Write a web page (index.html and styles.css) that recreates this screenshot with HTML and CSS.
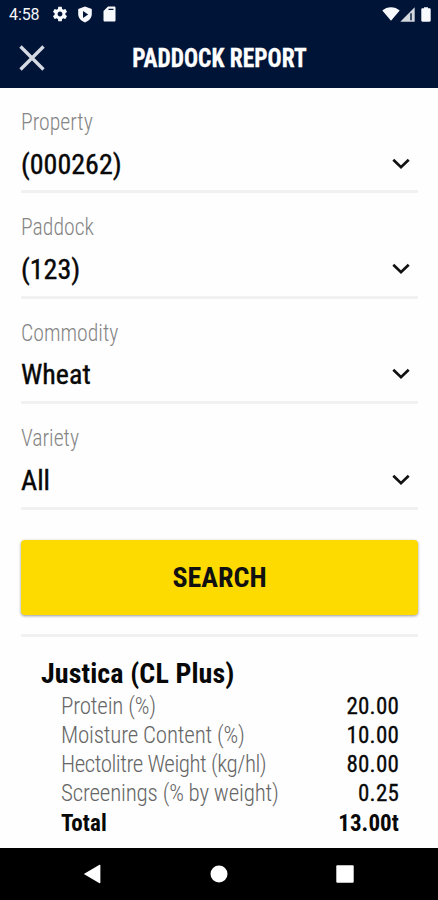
FILE: index.html
```html
<!DOCTYPE html>
<html>
<head>
<meta charset="utf-8">
<title>Paddock Report</title>
<link rel="stylesheet" href="styles.css">
</head>
<body>

<div class="status">
	<span class="time">4:58</span>
	<svg class="gear" width="18" height="18" viewBox="0 0 24 24"><path d="M19.14 12.94c.04-.3.06-.61.06-.94 0-.32-.02-.64-.07-.94l2.03-1.58c.18-.14.23-.41.12-.61l-1.92-3.32c-.12-.22-.37-.29-.59-.22l-2.39.96c-.5-.38-1.03-.7-1.62-.94l-.36-2.54c-.04-.24-.24-.41-.48-.41h-3.84c-.24 0-.43.17-.47.41l-.36 2.54c-.59.24-1.13.57-1.62.94l-2.39-.96c-.22-.08-.47 0-.59.22L2.74 8.87c-.12.21-.08.47.12.61l2.03 1.58c-.05.3-.09.63-.09.94s.02.64.07.94l-2.03 1.58c-.18.14-.23.41-.12.61l1.92 3.32c.12.22.37.29.59.22l2.39-.96c.5.38 1.03.7 1.62.94l.36 2.54c.05.24.24.41.48.41h3.84c.24 0 .44-.17.47-.41l.36-2.54c.59-.24 1.13-.56 1.62-.94l2.39.96c.22.08.47 0 .59-.22l1.92-3.32c.12-.22.07-.47-.12-.61l-2.01-1.58zM12 15.2c-1.760 0-3.200-1.440-3.200-3.200s1.440-3.200 3.200-3.200 3.200 1.440 3.200 3.200-1.440 3.200-3.200 3.200z"/></svg>
	<svg class="shield" width="16" height="17" viewBox="0 0 16 17"><path fill-rule="evenodd" d="M8 .6 14.8 3v5c0 4-2.900 6.900-6.800 8.400C4.100 14.900 1.200 12 1.200 8V3zM6 5v7l5.200-3.500z"/></svg>
	<svg class="card" width="13" height="16" viewBox="0 0 13 16"><path fill-rule="evenodd" d="M5 .5h6.200c.8 0 1.300.5 1.300 1.300v12.400c0 .8-.5 1.300-1.300 1.300H1.800C1 15.500.5 15 .5 14.200V5zM5.500 2.800v1.200h5V2.800z"/></svg>
	<span class="space"></span>
	<svg class="wifi" width="18" height="14" viewBox="0 0 18 14"><path d="M9 13.800.3 3.600C5-.9 13-.9 17.700 3.600z"/></svg>
	<svg class="signal" width="15" height="15" viewBox="0 0 15 15"><path d="M.3 14.800 14.700.3v14.500z" opacity=".85"/><path d="M10.300 6.200h1.400v7h-1.400z" fill="#001438"/></svg>
	<svg class="battery" width="10" height="15" viewBox="0 0 10 15"><path d="M3 .2h4v1h1.500c.7 0 1.200.5 1.200 1.200v11.200c0 .7-.5 1.200-1.200 1.200h-7c-.7 0-1.200-.5-1.200-1.200V2.400c0-.7.5-1.200 1.200-1.200H3z"/></svg>
</div>

<div class="header">
	<svg class="close" width="26" height="26" viewBox="0 0 26 26"><path d="M1.500 1.500l23 23M24.500 1.500l-23 23"/></svg>
	<h1>PADDOCK REPORT</h1>
</div>

<div class="content">
	<div class="field">
		<label>Property</label>
		<div class="select">(000262)<svg class="arrow" width="18" height="12" viewBox="0 0 18 12"><path d="M1.300 1.800 9 9.200l7.700-7.400"/></svg></div>
	</div>
	<div class="field">
		<label>Paddock</label>
		<div class="select">(123)<svg class="arrow" width="18" height="12" viewBox="0 0 18 12"><path d="M1.300 1.800 9 9.200l7.700-7.400"/></svg></div>
	</div>
	<div class="field">
		<label>Commodity</label>
		<div class="select">Wheat<svg class="arrow" width="18" height="12" viewBox="0 0 18 12"><path d="M1.300 1.800 9 9.200l7.700-7.400"/></svg></div>
	</div>
	<div class="field">
		<label>Variety</label>
		<div class="select">All<svg class="arrow" width="18" height="12" viewBox="0 0 18 12"><path d="M1.300 1.800 9 9.200l7.700-7.400"/></svg></div>
	</div>

	<button class="search">SEARCH</button>

	<div class="results">
		<h2>Justica (CL Plus)</h2>
		<div class="row"><span>Protein (%)</span><b>20.00</b></div>
		<div class="row"><span>Moisture Content (%)</span><b>10.00</b></div>
		<div class="row"><span class="tight">Hectolitre Weight (kg/hl)</span><b>80.00</b></div>
		<div class="row"><span>Screenings (% by weight)</span><b>0.25</b></div>
		<div class="row total"><span>Total</span><b>13.00t</b></div>
	</div>
</div>

<div class="navbar">
	<svg width="18" height="20" viewBox="0 0 18 20"><path d="M.8 10 16.500.8q.9-.3.900.6v17.200q0 .9-.9.600z"/></svg>
	<svg width="18" height="18" viewBox="0 0 18 18"><circle cx="9" cy="9" r="8.500"/></svg>
	<svg width="18" height="18" viewBox="0 0 18 18"><rect x=".3" y=".3" width="17.400" height="17.400" rx="1"/></svg>
</div>

</body>
</html>
```
FILE: styles.css
```css
* {
	box-sizing:border-box;
}
body {
	margin:0;
	height:900px;
	display:flex;
	flex-direction:column;
	overflow:hidden;
	font-family:Roboto, "Liberation Sans", sans-serif;
	font-stretch:75%;
	background-color:#fefefe;
	color:#080808;
}
svg {
	display:block;
	flex:none;
}
.status {
	display:flex;
	align-items:center;
	height:28px;
	padding:0 7px 0 9px;
	background-color:#001438;
	color:#f4f6fa;
	fill:#f8f9fc;
}
.time {
	width:42px;
	font-size:16px;
	font-stretch:100%;
	letter-spacing:-0.1px;
}
.shield {
	margin-left:8px;
}
.card {
	margin-left:10px;
}
.space {
	flex:1;
}
.battery {
	margin-left:6px;
}
.header {
	display:grid;
	grid-template-columns:60px 1fr 60px;
	align-items:center;
	height:60px;
	background-color:#001438;
	color:white;
}
.close {
	margin-left:19px;
	fill:none;
	stroke:#d5d9e2;
	stroke-width:3.300;
}
h1 {
	margin:0 0 1px 1px;
	font-size:26px;
	line-height:30px;
	font-weight:700;
	text-align:center;
	transform:scaleX(0.9);
	-webkit-text-stroke:0.3px white;
}
.content {
	flex:1;
	padding:0 20px 0 21px;
}
.field {
	height:105.400px;
	padding-top:19px;
	border-bottom:3px solid #f1f1f1;
}
label {
	display:block;
	font-size:24px;
	line-height:30px;
	font-weight:300;
	color:#858585;
	transform:scaleX(0.905);
	transform-origin:left;
}
.select {
	display:flex;
	align-items:center;
	justify-content:space-between;
	height:54px;
	padding-right:8px;
	font-size:28px;
	-webkit-text-stroke:0.4px #080808;
}
.arrow {
	fill:none;
	stroke:#111;
	stroke-width:2.700;
	margin-top:-1px;
}
.search {
	display:block;
	width:100%;
	height:75px;
	margin:30px 0 19px;
	padding:0;
	border:none;
	border-radius:4px;
	background-color:#fddb00;
	color:#111;
	font:700 28px Roboto, sans-serif;
	font-stretch:75%;
	box-shadow:0 1px 3px rgba(0, 0, 0, 0.4);
}
.results {
	padding:20px 19px 0 20px;
	border-top:3px solid #f1f1f1;
}
h2 {
	margin:0 0 2px;
	font-size:28px;
	line-height:33px;
	font-weight:700;
	letter-spacing:0.1px;
}
.row {
	display:flex;
	justify-content:space-between;
	padding-left:20px;
	font-size:23px;
	line-height:29.300px;
	font-weight:300;
	letter-spacing:-0.2px;
	color:#666;
}
.row .tight {
	letter-spacing:-0.48px;
}
.row b {
	font-weight:400;
	letter-spacing:0.2px;
	color:#080808;
	-webkit-text-stroke:0.3px #080808;
}
.row.total span, .row.total b {
	font-weight:700;
	letter-spacing:0.1px;
	color:#080808;
	-webkit-text-stroke:0;
}
.navbar {
	display:flex;
	justify-content:space-between;
	align-items:center;
	height:52.500px;
	padding:0 84px 0 83px;
	background-color:black;
	fill:white;
}
```
